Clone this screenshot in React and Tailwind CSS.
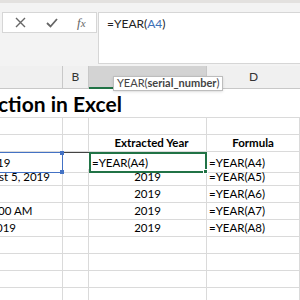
const cols = 'grid grid-cols-[63px_26px_118px_1fr]';

function Cell({ children, className = '' }) {
  return (
    <div className={`h-full border-r border-b border-[#dadada] overflow-hidden whitespace-nowrap flex items-center ${className}`}>
      {children}
    </div>
  );
}

const rows = [
  { a: '19', aShift: '-ml-[3px]', c: '', d: '=YEAR(A4)', active: true },
  { a: 'st 5, 2019', aShift: '-ml-[1px]', c: '2019', d: '=YEAR(A5)' },
  { a: '', c: '2019', d: '=YEAR(A6)' },
  { a: '00 AM', aShift: '-ml-[2px]', c: '2019', d: '=YEAR(A7)' },
  { a: '019', aShift: '-ml-[4px]', c: '2019', d: '=YEAR(A8)' },
];

export default function App() {
  return (
    <div className="w-[300px] h-[300px] overflow-hidden bg-white relative text-black" style={{ fontFamily: 'Lato, "Open Sans", sans-serif' }}>
      <div className="h-[3px] bg-[#e3e1df]" />
      <div className="h-[63px] bg-[#f3f3f3] flex items-start pt-[9px]">
        <div className="ml-[2px] w-[95px] h-[21px] bg-white border border-[#d6d6d6] flex items-center text-[#666]">
          <svg className="ml-[12px]" width="11" height="11" viewBox="0 0 11 11">
            <path d="M1 1L10 10M10 1L1 10" stroke="#666" strokeWidth="1.4" />
          </svg>
          <svg className="ml-[20px]" width="12" height="10" viewBox="0 0 12 10">
            <path d="M1 5L4.5 8.5L11 1" stroke="#666" strokeWidth="1.8" fill="none" />
          </svg>
          <span className="ml-[19px] italic text-[13px] leading-none" style={{ fontFamily: '"Liberation Serif", serif' }}>
            f<span className="text-[11px]">x</span>
          </span>
        </div>
        <div className="ml-[1px] flex-1 h-[52px] bg-white border-l border-t border-b border-[#d6d6d6] pl-[8px] pt-[2px] text-[12px] text-[#222]">
          =YEAR(<span className="text-[#3d6fb6]">A4</span>)
        </div>
      </div>

      <div className={`${cols} h-[23px] bg-[#f0f0f0] text-[12px] text-[#333]`}>
        <div className="border-r border-b border-[#c8c8c8]" />
        <div className="border-r border-b border-[#c8c8c8] flex items-center justify-center">B</div>
        <div className="bg-[#d3d3d3] border-r border-[#c8c8c8] border-b-2 border-b-[#217346]" />
        <div className="border-b border-[#c8c8c8] flex items-center justify-center">D</div>
      </div>

      <div className={`${cols} h-[29px]`}>
        <div className="col-span-4 border-b border-[#dadada] flex items-end pb-[3px] whitespace-nowrap">
          <span className="-ml-[2px] font-bold text-[21px] leading-none">ction in Excel</span>
        </div>
      </div>

      <div className={`${cols} h-[17px] text-[11.5px]`}>
        <Cell />
        <Cell />
        <Cell />
        <Cell />
      </div>
      <div className={`${cols} h-[17px] text-[11.5px] font-bold`}>
        <Cell />
        <Cell />
        <Cell className="justify-center pl-[8px]">Extracted Year</Cell>
        <Cell className="justify-center">Formula</Cell>
      </div>

      {rows.map((r, i) => (
        <div key={i} className={`${cols} h-[17px] text-[11.5px]`}>
          {r.active ? (
            <div className="h-full relative border-y border-[#4472c4] border-r border-r-[#4472c4] whitespace-nowrap flex items-center">
              <span className={r.aShift}>{r.a}</span>
              <span className="absolute -right-[2px] -top-[2px] w-[4px] h-[4px] bg-[#4472c4]" />
              <span className="absolute -right-[2px] -bottom-[2px] w-[4px] h-[4px] bg-[#4472c4]" />
            </div>
          ) : (
            <Cell>
              <span className={r.aShift}>{r.a}</span>
            </Cell>
          )}
          {r.active ? (
            <div className="h-full border-t border-t-[#444] border-b border-[#dadada]" />
          ) : (
            <Cell />
          )}
          {r.active ? (
            <div className="h-full relative border-2 border-[#217346] flex items-center pl-[1px] whitespace-nowrap">
              =YEAR(A4)
              <span className="absolute -right-[3px] -bottom-[3px] w-[5px] h-[5px] bg-[#217346] border border-white" />
            </div>
          ) : (
            <Cell className="justify-center">{r.c}</Cell>
          )}
          <Cell className="pl-[2px]">{r.d}</Cell>
        </div>
      ))}

      {[0, 1, 2, 3].map((i) => (
        <div key={i} className={`${cols} h-[17px]`}>
          <Cell />
          <Cell />
          <Cell />
          <Cell />
        </div>
      ))}

      <div className="absolute left-[113px] top-[76px] h-[15px] px-[3px] bg-white border border-[#bdbdbd] flex items-center text-[11px] text-[#444] whitespace-nowrap shadow-sm">
        YEAR(<span className="font-bold">serial_number</span>)
      </div>
    </div>
  );
}
